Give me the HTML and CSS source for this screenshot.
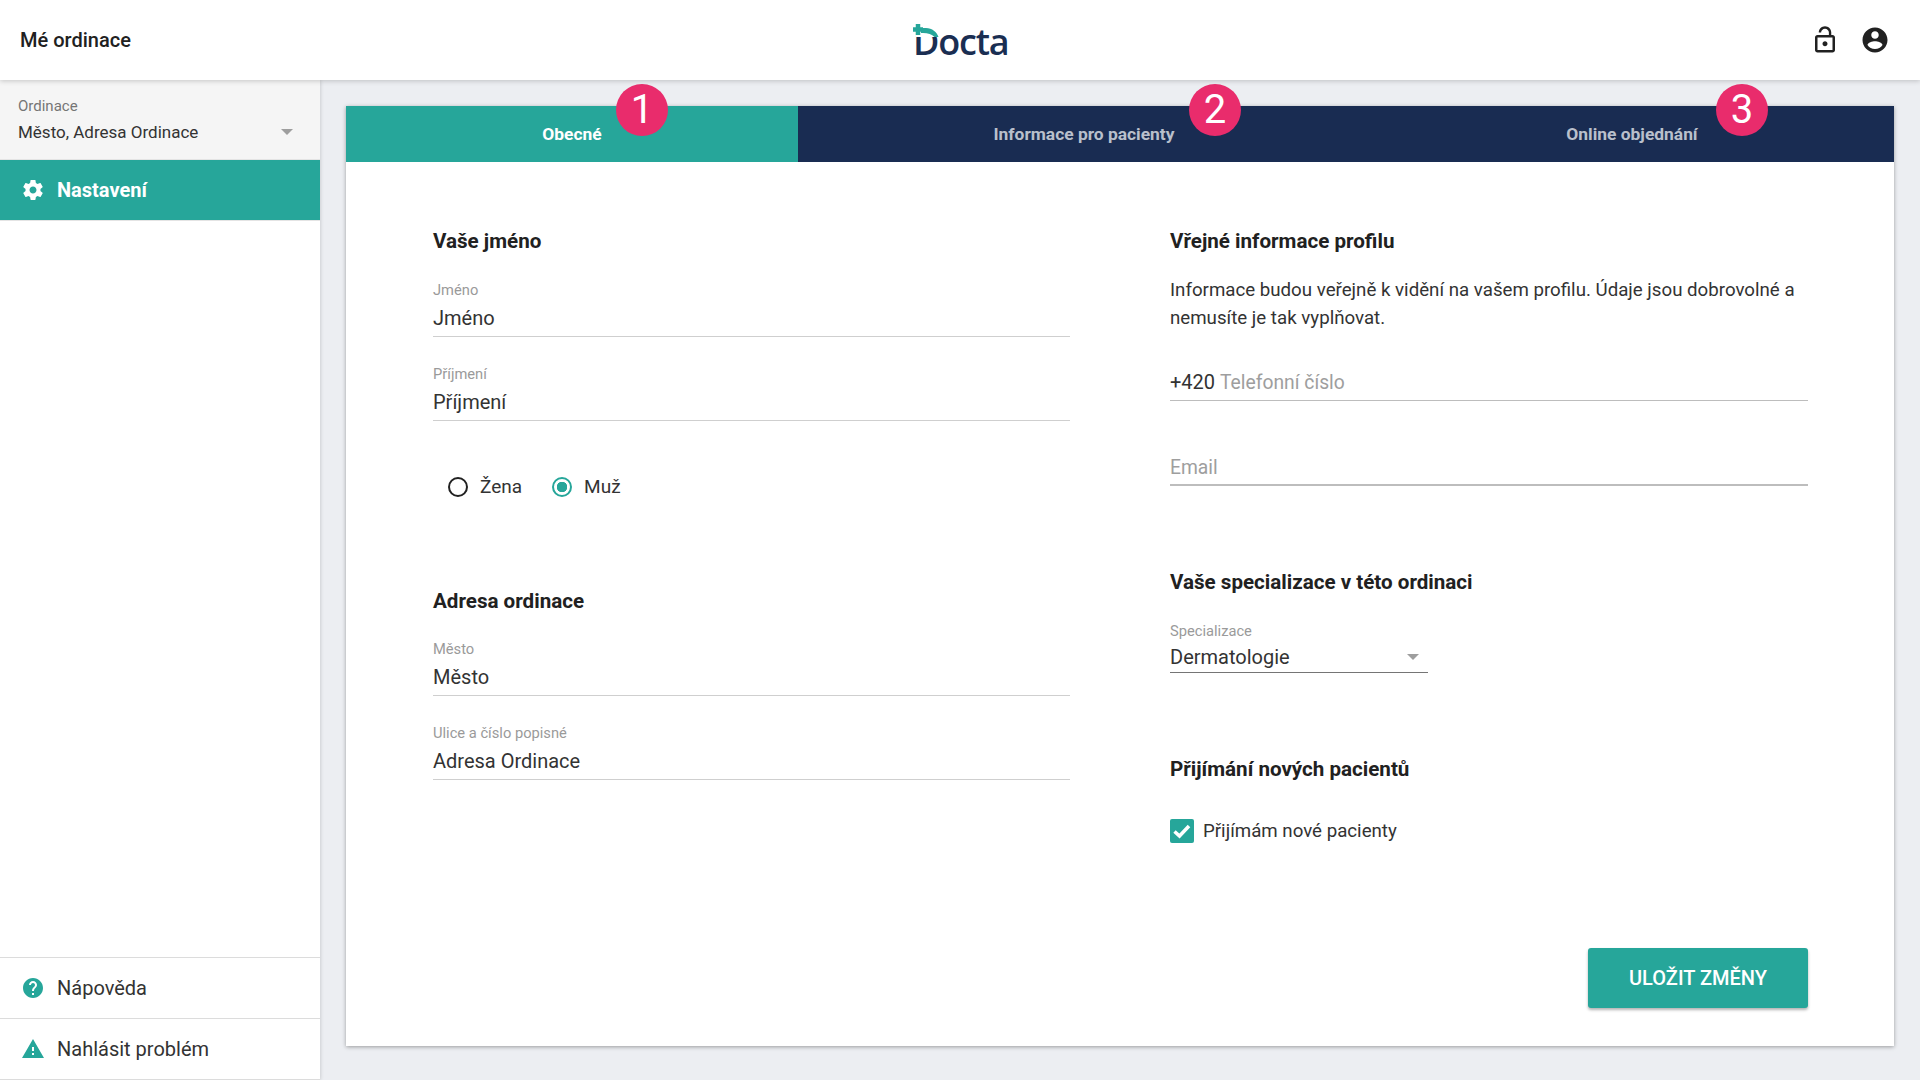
FILE: index.html
```html
<!DOCTYPE html>
<html lang="cs">
<head>
    <meta charset="UTF-8">
    <title>Docta - Nastavení</title>
    <link rel="stylesheet" href="styles.css">
</head>
<body>
    <header class="topbar">
        <div class="topbar-title">Mé ordinace</div>
        <div class="logo">
            <span class="logo-text">Docta</span>
            <svg class="logo-mark" width="36" height="24" viewBox="0 0 36 24">
                <rect x="3" y="0" width="23" height="14" fill="#fff"/>
                <path d="M0 6.5H10" stroke="#26a69a" stroke-width="4.5" fill="none"/>
                <path d="M5 1V12" stroke="#26a69a" stroke-width="4.5" fill="none"/>
                <path d="M8 5H13C19 5 24 9 25.5 14L21.5 14C19 11.5 15 10 10 10H8Z" fill="#26a69a"/>
            </svg>
        </div>
        <div class="topbar-icons">
            <svg width="30" height="30" viewBox="0 0 24 24" fill="#212121"><path d="M12 17c1.1 0 2-.9 2-2s-.9-2-2-2-2 .9-2 2 .9 2 2 2zm6-9h-1V6c0-2.76-2.24-5-5-5S7 3.24 7 6h1.9c0-1.71 1.39-3.1 3.1-3.1 1.71 0 3.1 1.39 3.1 3.1v2H6c-1.1 0-2 .9-2 2v10c0 1.1.9 2 2 2h12c1.1 0 2-.9 2-2V10c0-1.1-.9-2-2-2zm0 12H6V10h12v10z"/></svg>
            <svg width="30" height="30" viewBox="0 0 24 24" fill="#212121"><path d="M12 2C6.48 2 2 6.48 2 12s4.48 10 10 10 10-4.48 10-10S17.52 2 12 2zm0 3c1.66 0 3 1.34 3 3s-1.34 3-3 3-3-1.34-3-3 1.34-3 3-3zm0 14.2c-2.5 0-4.71-1.28-6-3.22.03-1.99 4-3.08 6-3.08 1.99 0 5.97 1.09 6 3.08-1.29 1.94-3.5 3.22-6 3.22z"/></svg>
        </div>
    </header>

    <div class="layout">
        <aside class="sidebar">
            <div class="clinic-select">
                <div class="clinic-label">Ordinace</div>
                <div class="clinic-value">
                    <span>Město, Adresa Ordinace</span>
                    <span class="arrow"></span>
                </div>
            </div>
            <div class="nav-item active">
                <svg width="24" height="24" viewBox="0 0 24 24" fill="#fff"><path d="M19.43 12.98c.04-.32.07-.64.07-.98s-.03-.66-.07-.98l2.11-1.65c.19-.15.24-.42.12-.64l-2-3.46c-.12-.22-.39-.3-.61-.22l-2.49 1c-.52-.4-1.08-.73-1.69-.98l-.38-2.65C14.46 2.18 14.25 2 14 2h-4c-.25 0-.46.18-.49.42l-.38 2.65c-.61.25-1.17.59-1.69.98l-2.49-1c-.23-.09-.49 0-.61.22l-2 3.46c-.13.22-.07.49.12.64l2.11 1.65c-.04.32-.07.65-.07.98s.03.66.07.98l-2.11 1.65c-.19.15-.24.42-.12.64l2 3.46c.12.22.39.3.61.22l2.49-1c.52.4 1.08.73 1.69.98l.38 2.65c.03.24.24.42.49.42h4c.25 0 .46-.18.49-.42l.38-2.65c.61-.25 1.17-.59 1.69-.98l2.49 1c.23.09.49 0 .61-.22l2-3.46c.12-.22.07-.49-.12-.64l-2.11-1.65zM12 15.5c-1.93 0-3.5-1.57-3.5-3.5s1.57-3.5 3.5-3.5 3.5 1.57 3.5 3.5-1.57 3.5-3.5 3.5z"/></svg>
                <span>Nastavení</span>
            </div>
            <div class="sidebar-bottom">
                <div class="nav-item">
                    <svg width="24" height="24" viewBox="0 0 24 24" fill="#26a69a"><path d="M12 2C6.48 2 2 6.48 2 12s4.48 10 10 10 10-4.48 10-10S17.52 2 12 2zm1 17h-2v-2h2v2zm2.07-7.75l-.9.92C13.45 12.9 13 13.5 13 15h-2v-.5c0-1.1.45-2.1 1.17-2.83l1.24-1.26c.37-.36.59-.86.59-1.41 0-1.1-.9-2-2-2s-2 .9-2 2H8c0-2.21 1.79-4 4-4s4 1.79 4 4c0 .88-.36 1.68-.93 2.25z"/></svg>
                    <span>Nápověda</span>
                </div>
                <div class="nav-item">
                    <svg width="24" height="24" viewBox="0 0 24 24" fill="#26a69a"><path d="M1 21h22L12 2 1 21zm12-3h-2v-2h2v2zm0-4h-2v-4h2v4z"/></svg>
                    <span>Nahlásit problém</span>
                </div>
            </div>
        </aside>

        <main class="content">
            <div class="panel">
                <div class="tabs">
                    <div class="tab tab-active">Obecné<span class="badge badge-1">1</span></div>
                    <div class="tab tab-info">Informace pro pacienty<span class="badge badge-2">2</span></div>
                    <div class="tab tab-online">Online objednání<span class="badge badge-3">3</span></div>
                </div>

                <div class="form">
                    <section class="col">
                        <h3>Vaše jméno</h3>
                        <div class="field first">
                            <label>Jméno</label>
                            <div class="value">Jméno</div>
                        </div>
                        <div class="field">
                            <label>Příjmení</label>
                            <div class="value">Příjmení</div>
                        </div>
                        <div class="radios">
                            <span class="radio"><i class="radio-dot"></i>Žena</span>
                            <span class="radio checked"><i class="radio-dot"></i>Muž</span>
                        </div>
                        <h3 class="address-title">Adresa ordinace</h3>
                        <div class="field first address-first">
                            <label>Město</label>
                            <div class="value">Město</div>
                        </div>
                        <div class="field">
                            <label>Ulice a číslo popisné</label>
                            <div class="value">Adresa Ordinace</div>
                        </div>
                    </section>

                    <section class="col">
                        <h3>Vřejné informace profilu</h3>
                        <p class="info">Informace budou veřejně k vidění na vašem profilu. Údaje jsou dobrovolné a nemusíte je tak vyplňovat.</p>
                        <div class="field plain phone">
                            <div class="value">+420 <span class="placeholder">Telefonní číslo</span></div>
                        </div>
                        <div class="field plain email">
                            <div class="value"><span class="placeholder">Email</span></div>
                        </div>
                        <h3 class="spec-title">Vaše specializace v této ordinaci</h3>
                        <div class="spec-select">
                            <label>Specializace</label>
                            <div class="value">Dermatologie<span class="arrow"></span></div>
                        </div>
                        <h3 class="accept-title">Přijímání nových pacientů</h3>
                        <div class="check">
                            <svg width="24" height="24" viewBox="0 0 24 24"><rect width="24" height="24" rx="2" fill="#26a69a"/><path d="M4.5 12.5l5 4.5 9.5-10" stroke="#fff" stroke-width="3.5" fill="none"/></svg>
                            <span>Přijímám nové pacienty</span>
                        </div>
                        <div class="actions">
                            <button class="save">ULOŽIT ZMĚNY</button>
                        </div>
                    </section>
                </div>
            </div>
        </main>
    </div>
</body>
</html>
```

FILE: styles.css
```css
* {
    box-sizing: border-box;
}
html, body {
    height: 100%;
}
body {
    margin: 0;
    font-family: Roboto, "Noto Sans", sans-serif;
    color: #212121;
    background-color: #eceef2;
    overflow: hidden;
}
.topbar {
    height: 80px;
    background-color: #fff;
    display: flex;
    align-items: center;
    justify-content: space-between;
    padding: 0 20px;
    position: relative;
    z-index: 2;
    box-shadow: 0 1px 5px rgba(0, 0, 0, 0.2);
}
.topbar-title {
    font-size: 20px;
    font-weight: 500;
    width: 300px;
}
.logo {
    position: relative;
    width: 96px;
    height: 40px;
    margin-left: 2px;
}
.logo-text {
    font-family: "Open Sans", sans-serif;
    font-size: 36px;
    font-weight: 600;
    letter-spacing: -1.2px;
    line-height: 40px;
    color: #1a2e52;
    display: block;
    margin-top: 2px;
}
.logo-mark {
    position: absolute;
    left: 0;
    top: 3px;
}
.topbar-icons {
    width: 300px;
    display: flex;
    justify-content: flex-end;
    gap: 20px;
    padding-right: 10px;
}
.layout {
    display: flex;
    height: 1000px;
}
.sidebar {
    width: 320px;
    background-color: #fff;
    display: flex;
    flex-direction: column;
    box-shadow: 0 0 4px rgba(0, 0, 0, 0.2);
}
.clinic-select {
    height: 80px;
    background-color: #f5f5f5;
    padding: 17px 18px 0;
}
.clinic-label {
    font-size: 15px;
    line-height: 18px;
    color: #757575;
}
.clinic-value {
    font-size: 17px;
    line-height: 24px;
    margin-top: 5px;
    color: #333;
    display: flex;
    align-items: center;
    justify-content: space-between;
    padding-right: 9px;
}
.arrow {
    display: inline-block;
    width: 0;
    height: 0;
    border-left: 6px solid transparent;
    border-right: 6px solid transparent;
    border-top: 6px solid #9e9e9e;
}
.nav-item {
    height: 61px;
    display: flex;
    align-items: center;
    gap: 12px;
    padding-left: 21px;
    font-size: 20px;
    color: #333;
    border-top: 1px solid #dcdcdc;
}
.nav-item.active {
    height: 60px;
    background-color: #26a69a;
    color: #fff;
    font-weight: 700;
    border-top: 0;
    margin-bottom: 1px;
    box-shadow: 0 -1px 0 #e4e4e4, 0 1px 0 #e4e4e4;
}
.sidebar-bottom {
    margin-top: auto;
    border-bottom: 1px solid #dcdcdc;
}
.content {
    flex: 1;
    padding: 26px 26px 34px;
}
.panel {
    background-color: #fff;
    height: 940px;
    box-shadow: 0 1px 4px rgba(0, 0, 0, 0.35);
    display: flex;
    flex-direction: column;
}
.tabs {
    display: flex;
    height: 56px;
    background-color: #192c52;
}
.tab {
    position: relative;
    display: flex;
    align-items: center;
    justify-content: center;
    font-size: 17.4px;
    font-weight: 700;
    color: #b9c0cc;
}
.tab-active {
    width: 452px;
    background-color: #26a69a;
    color: #fff;
}
.tab-info {
    width: 572px;
}
.tab-online {
    width: 524px;
}
.badge {
    position: absolute;
    top: -22px;
    width: 52px;
    height: 52px;
    border-radius: 50%;
    background-color: #e92c6c;
    color: #fff;
    font-size: 40px;
    font-weight: 400;
    line-height: 52px;
    text-align: center;
}
.badge-1 {
    left: 270px;
}
.badge-2 {
    left: 391px;
}
.badge-3 {
    left: 346px;
}
.form {
    flex: 1;
    display: grid;
    grid-template-columns: 637px 638px;
    column-gap: 100px;
    padding: 66px 86px 0 87px;
}
.col {
    display: flex;
    flex-direction: column;
}
h3 {
    margin: 0;
    font-size: 20.6px;
    font-weight: 700;
    line-height: 27px;
    color: #212121;
}
.field {
    margin-top: 28px;
    height: 56px;
    border-bottom: 1px solid #cfcfcf;
}
.field.first {
    margin-top: 26px;
}
.field.address-first {
    margin-top: 25px;
}
label {
    display: block;
    font-size: 14.7px;
    line-height: 18px;
    color: #9a9a9a;
}
.value {
    font-size: 20px;
    line-height: 28px;
    margin-top: 5px;
    color: #333;
}
.radios {
    display: flex;
    gap: 30px;
    padding-left: 15px;
    margin-top: 51px;
    font-size: 19px;
    line-height: 30px;
    color: #333;
}
.radio {
    display: flex;
    align-items: center;
    gap: 12px;
}
.radio-dot {
    width: 20px;
    height: 20px;
    border: 2px solid #212121;
    border-radius: 50%;
}
.radio.checked .radio-dot {
    border-color: #26a69a;
    background: radial-gradient(circle, #26a69a 0 5px, #fff 5.5px);
}
.address-title {
    margin-top: 86px;
}
.info {
    margin: 21px 0 0;
    font-size: 18.7px;
    line-height: 28px;
    color: #333;
}
.field.plain {
    border-bottom: 1px solid #bdbdbd;
}
.field.phone {
    margin-top: 36px;
    height: 33px;
}
.field.email {
    margin-top: 52px;
    height: 33px;
    border-bottom: 2px solid #bdbdbd;
}
.plain .value {
    margin-top: 0;
}
.placeholder {
    font-size: 19.3px;
    color: #9e9e9e;
}
.spec-title {
    margin-top: 83px;
}
.spec-select {
    width: 258px;
    margin-top: 26px;
    border-bottom: 1px solid #757575;
}
.spec-select .value {
    margin-top: 4px;
    display: flex;
    align-items: center;
    justify-content: space-between;
    padding-right: 9px;
    padding-bottom: 2px;
    line-height: 26px;
}
.accept-title {
    margin-top: 83px;
}
.check {
    display: flex;
    align-items: center;
    gap: 9px;
    margin-top: 36px;
    font-size: 18.7px;
    color: #333;
}
.actions {
    display: flex;
    justify-content: flex-end;
    margin-top: 105px;
}
.save {
    width: 220px;
    height: 60px;
    border: 0;
    border-radius: 3px;
    background-color: #26a69a;
    color: #fff;
    font-family: inherit;
    font-size: 20px;
    font-weight: 500;
    box-shadow: 0 2px 3px rgba(0, 0, 0, 0.3);
}
```
